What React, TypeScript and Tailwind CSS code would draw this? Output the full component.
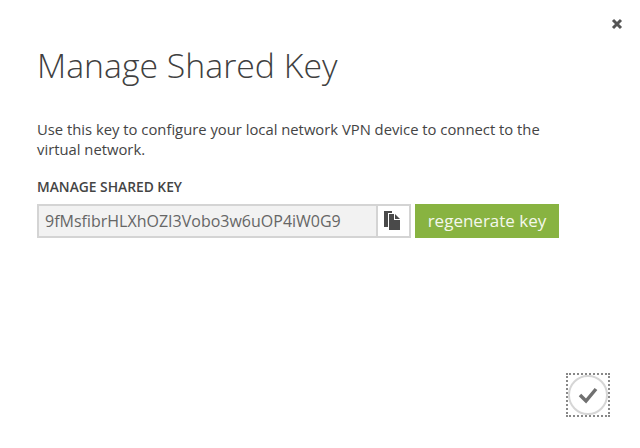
export default function App() {
  return (
    <div className="relative h-[448px] w-[640px] overflow-hidden bg-white font-['Open_Sans',sans-serif] text-[#333]">
      <button className="absolute right-[17px] top-[18px] text-[#555]">
        <svg width="12" height="12" viewBox="0 0 12 12">
          <path d="M2 2 L10 10 M10 2 L2 10" stroke="currentColor" strokeWidth="3" fill="none" />
        </svg>
      </button>

      <div className="flex h-full flex-col pl-[37px] pt-[43px]">
        <h1 className="text-[33.8px] font-light leading-[44px] text-[#404040]">Manage Shared Key</h1>
        <p className="mt-[32px] w-[515px] text-[14.8px] leading-[20px] text-[#444]">
          Use this key to configure your local network VPN device to connect to the virtual network.
        </p>
        <label className="mt-[19px] text-[13.8px] font-semibold uppercase leading-[18px] text-[#444]">
          Manage Shared Key
        </label>
        <div className="mt-[8px] flex h-[34px] items-stretch gap-[4px]">
          <div className="flex w-[374px] border-2 border-[#d4d4d4]">
            <div className="flex flex-1 items-center bg-[#f2f2f2] pl-[6px] text-[16px] text-[#666]">
              9fMsfibrHLXhOZI3Vobo3w6uOP4iW0G9
            </div>
            <div className="flex w-[33px] items-center justify-center border-l-2 border-[#d4d4d4] bg-white">
              <svg width="17" height="20" viewBox="0 0 17 20" className="-ml-[3px]">
                <path d="M0 0 H8 V2 H4 V16 H0 Z" fill="#4a4a4a" />
                <path d="M5 3 H10 V9 H16 V19 H5 Z" fill="#4a4a4a" />
                <path d="M11 3 L16 8 H11 Z" fill="#4a4a4a" />
              </svg>
            </div>
          </div>
          <button className="w-[144px] bg-[#88b341] text-[17px] font-normal text-[#f4f8ec]">regenerate key</button>
        </div>
      </div>

      <button className="absolute left-[566px] top-[373px] flex h-[44px] w-[44px] items-center justify-center border-2 border-dotted border-[#888]">
        <span className="flex h-[40px] w-[40px] items-center justify-center rounded-full border-2 border-[#d6d6d6]">
          <svg width="22" height="18" viewBox="0 0 22 18">
            <path d="M3 9 L9 15 L19 3" stroke="#707070" strokeWidth="3.5" fill="none" />
          </svg>
        </span>
      </button>
    </div>
  );
}
